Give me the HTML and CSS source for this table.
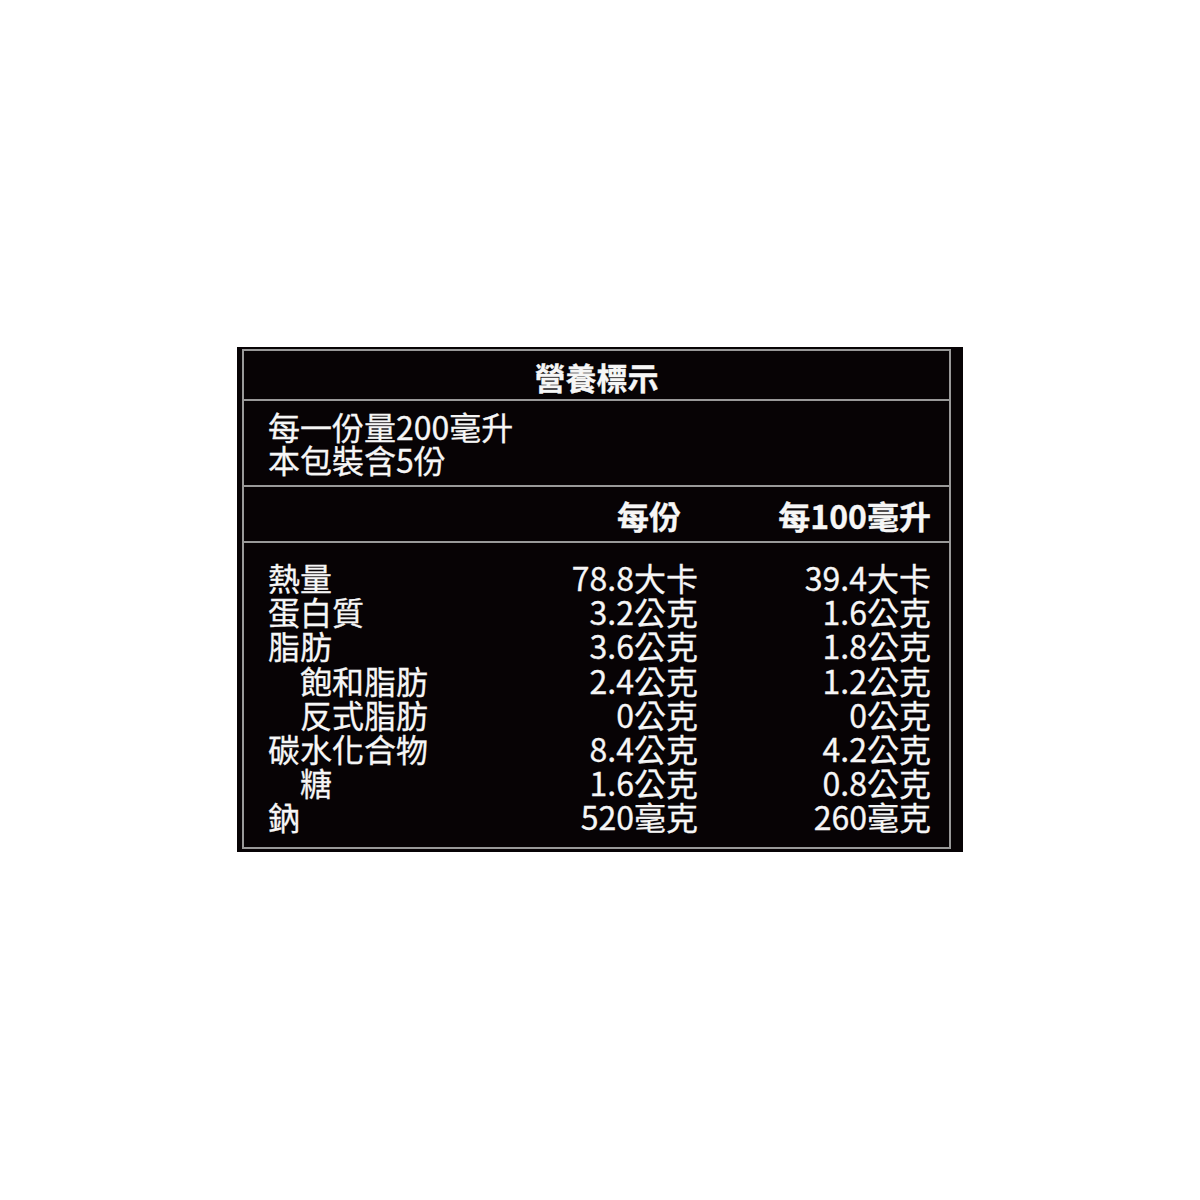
FILE: index.html
```html
<!DOCTYPE html>
<html lang="zh-Hant">
<head>
<meta charset="utf-8">
<title>營養標示</title>
<link rel="stylesheet" href="styles.css">
</head>
<body>
<div class="page">
  <div class="label">
    <div class="panel">
      <div class="title">營養標示</div>
      <div class="serving">
        <div>每一份量200毫升</div>
        <div>本包裝含5份</div>
      </div>
      <div class="grid head">
        <div></div>
        <div class="h1">每份</div>
        <div class="h2">每100毫升</div>
      </div>
      <div class="grid data">
        <div>熱量</div><div class="v">78.8大卡</div><div class="v">39.4大卡</div>
        <div>蛋白質</div><div class="v">3.2公克</div><div class="v">1.6公克</div>
        <div>脂肪</div><div class="v">3.6公克</div><div class="v">1.8公克</div>
        <div class="sub">飽和脂肪</div><div class="v">2.4公克</div><div class="v">1.2公克</div>
        <div class="sub">反式脂肪</div><div class="v">0公克</div><div class="v">0公克</div>
        <div>碳水化合物</div><div class="v">8.4公克</div><div class="v">4.2公克</div>
        <div class="sub">糖</div><div class="v">1.6公克</div><div class="v">0.8公克</div>
        <div>鈉</div><div class="v">520毫克</div><div class="v">260毫克</div>
      </div>
    </div>
  </div>
</div>
</body>
</html>
```
FILE: styles.css
```css
html, body {
  margin: 0;
  padding: 0;
  background: #ffffff;
}
.page {
  padding: 347px 0 0 237px;
  display: flex;
}
.label {
  width: 726px;
  height: 505px;
  box-sizing: border-box;
  background: #070305;
  padding: 2px 12px 3px 5px;
  display: flex;
  font-family: "Noto Sans CJK TC", "Noto Sans", sans-serif;
  color: #f6f6f6;
  font-size: 32px;
  font-weight: 400;
  -webkit-text-stroke: 0.3px #f6f6f6;
}
.panel {
  flex: 1;
  border: 2px solid #999999;
  display: flex;
  flex-direction: column;
}
.title {
  height: 50px;
  border-bottom: 2px solid #999999;
  display: flex;
  align-items: center;
  justify-content: center;
  padding-top: 2px;
  box-sizing: border-box;
  font-weight: 700;
  font-size: 31px;
}
.serving {
  height: 86px;
  box-sizing: border-box;
  border-bottom: 2px solid #999999;
  padding: 9px 0 0 24px;
  line-height: 33px;
}
.grid {
  display: grid;
  grid-template-columns: 1fr 160px 233px;
  padding: 0 18px 0 24px;
}
.head {
  height: 56px;
  box-sizing: border-box;
  border-bottom: 2px solid #999999;
  align-items: center;
  font-weight: 700;
  padding-top: 2px;
}
.h1 {
  text-align: right;
  padding-right: 17px;
}
.h2 {
  text-align: right;
}
.data {
  padding-top: 17px;
  line-height: 34.2px;
}
.v {
  text-align: right;
}
.sub {
  padding-left: 32px;
}
```
